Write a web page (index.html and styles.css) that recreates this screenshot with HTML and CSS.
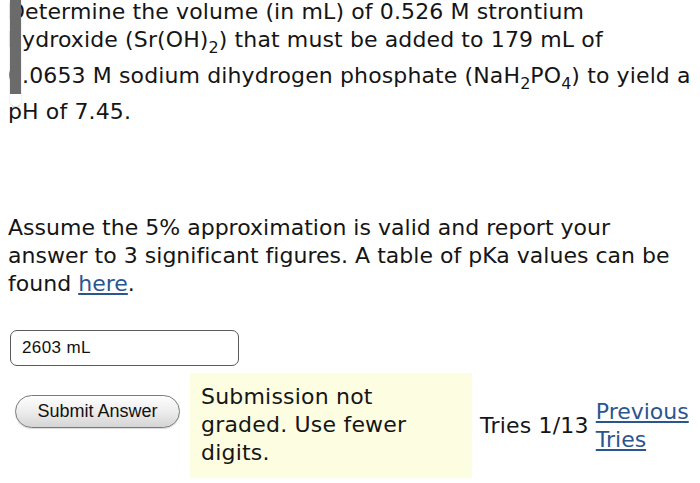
FILE: index.html
```html
<!DOCTYPE html>
<html lang="en">
<head>
  <meta charset="UTF-8" />
  <title>Question</title>
  <link rel="stylesheet" href="styles.css">
</head>
<body>
  <div class="scroll-thumb"></div>
  <div class="question">
    <p class="prompt">Determine the volume (in mL) of 0.526 M strontium<br>
      hydroxide (Sr(OH)<sub>2</sub>) that must be added to 179 mL of<br>
      0.0653 M sodium dihydrogen phosphate (NaH<sub>2</sub>PO<sub>4</sub>) to yield a<br>
      pH of 7.45.</p>
    <p class="note">Assume the 5% approximation is valid and report your<br>
      answer to 3 significant figures. A table of pKa values can be<br>
      found <a href="#">here</a>.</p>
  </div>

  <div class="answer">
    <input type="text" class="answer-input" value="2603 mL" />
  </div>

  <div class="submit-row">
    <button class="submit-btn">Submit Answer</button>
    <div class="feedback">Submission not graded. Use fewer digits.</div>
    <div class="tries">Tries 1/13</div>
    <a href="#" class="prev-link">Previous Tries</a>
  </div>
</body>
</html>
```

FILE: styles.css
```css
body {
  margin: 0;
  padding: 0 0 0 8px;
  font-family: "DejaVu Sans", Verdana, sans-serif;
  font-size: 22px;
  line-height: 28px;
  letter-spacing: 0.2px;
  color: #151515;
  background: white;
}
.scroll-thumb {
  position: absolute;
  left: 10px;
  top: 0;
  width: 11px;
  height: 106px;
  background: linear-gradient(#6b6b6b 0, #6b6b6b 94px, #fff 94px);
  border-radius: 0 0 6px 6px;
  box-shadow: 0 1px 2px rgba(0,0,0,0.2);
}
.question p {
  margin: 0;
  white-space: nowrap;
}
.prompt {
  margin-top: -2px !important;
  letter-spacing: 0.12px;
}
.prompt sub {
  font-size: 16px;
  vertical-align: -6px;
  letter-spacing: 0;
}
.note {
  margin-top: 88px !important;
  letter-spacing: 0.02px;
}
a {
  color: #2b5590;
}
.answer {
  margin-top: 32px;
  padding-left: 2px;
}
.answer-input {
  display: block;
  width: 229px;
  height: 36px;
  box-sizing: border-box;
  padding: 0 11px;
  border: 1px solid #5a5a5a;
  border-radius: 7px;
  font-family: "Liberation Sans", Arial, sans-serif;
  font-size: 17px;
  letter-spacing: 0.4px;
  color: #111;
}
.submit-row {
  display: flex;
  align-items: flex-start;
  margin-top: 7px;
}
.submit-btn {
  margin: 22px 0 0 7px;
  width: 165px;
  height: 33px;
  border: 1px solid #7a7a7a;
  border-radius: 17px;
  background: linear-gradient(#fefefe, #ebebeb 55%, #d4d4d4);
  box-shadow: 0 1px 1px rgba(0,0,0,0.15);
  font-family: "Liberation Sans", Arial, sans-serif;
  font-size: 18px;
  letter-spacing: 0;
  color: #111;
}
.feedback {
  margin-left: 10px;
  width: 282px;
  height: 105px;
  box-sizing: border-box;
  padding: 10px 11px;
  background: #fdfde2;
}
.tries {
  align-self: center;
  margin-left: 8px;
}
.prev-link {
  align-self: center;
  margin-left: 7px;
  width: 96px;
  letter-spacing: 0;
}
```
